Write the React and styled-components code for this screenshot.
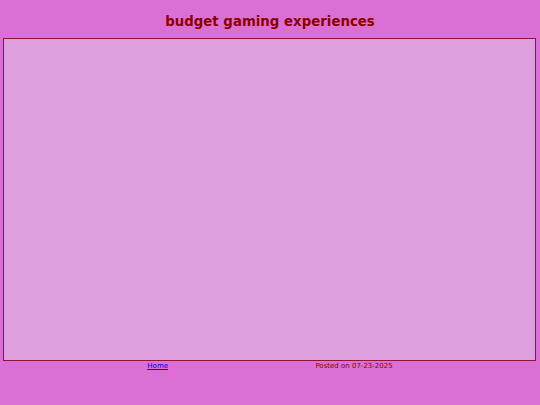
import React from "react";
import styled, { createGlobalStyle } from "styled-components";

const GlobalStyle = createGlobalStyle`
  html, body {
    margin: 0;
    padding: 0;
    background: #da70d6;
    font-family: "DejaVu Sans", Verdana, sans-serif;
  }
`;

const Page = styled.div`
  display: flex;
  flex-flow: column nowrap;
  width: 540px;
  min-height: 405px;
`;

const Title = styled.h1`
  margin: 0;
  padding: 13px 0 8px;
  text-align: center;
  font-size: 13.33px;
  line-height: 17px;
  font-weight: bold;
  color: #8b0000;
`;

const Frame = styled.div`
  margin: 0 4px 0 3px;
  height: 321px;
  border: 1px solid #93103a;
  background: #dda0dd;
`;

const Footer = styled.div`
  display: flex;
  flex-flow: row nowrap;
  justify-content: space-evenly;
  padding-top: 1px;
  font-size: 7px;
  line-height: 9px;
`;

const HomeLink = styled.a`
  color: #0000ee;
  text-decoration: underline;
`;

const Posted = styled.span`
  color: #8b0000;
`;

const App = () => {
  return (
    <Page>
      <GlobalStyle />
      <Title>budget gaming experiences</Title>
      <Frame />
      <Footer>
        <HomeLink href="#">Home</HomeLink>
        <Posted>Posted on 07-23-2025</Posted>
      </Footer>
    </Page>
  );
};

export default App;
